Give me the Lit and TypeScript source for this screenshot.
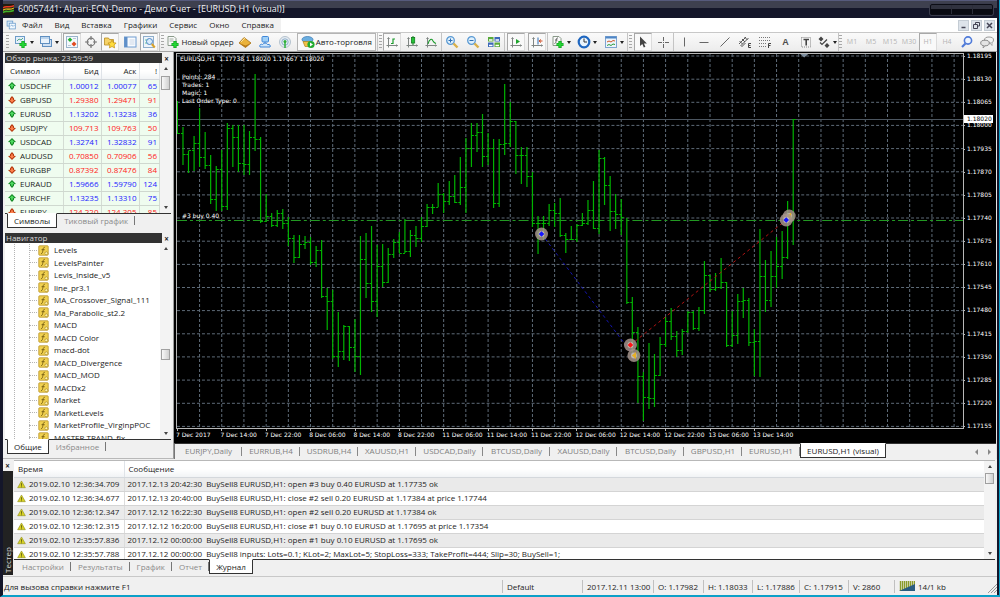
import { LitElement, html, svg, css } from "lit";
import { customElement, state } from "lit/decorators.js";
import { classMap } from "lit/directives/class-map.js";

/* high, low, close of every hourly bar, in plot units */
const BARS: number[][] = [
  [101, 133, 133], [127, 165, 154], [151, 173, 150], [136, 171, 143], [108, 167, 157], [132, 169, 165], [155, 204, 199],
  [166, 211, 169], [150, 211, 206], [123, 210, 128], [125, 167, 137], [125, 172, 163], [125, 175, 164], [131, 175, 137],
  [74, 151, 139], [137, 223, 221], [194, 222, 216], [213, 227, 225], [210, 227, 213], [209, 229, 223], [217, 246, 238],
  [235, 263, 257], [235, 258, 244], [236, 249, 242], [237, 265, 262], [246, 267, 250], [240, 298, 296], [288, 330, 301],
  [290, 359, 356], [312, 367, 351], [325, 360, 326], [326, 361, 347], [319, 372, 356], [236, 375, 259], [233, 298, 283],
  [226, 312, 301], [245, 317, 266], [244, 287, 282], [248, 283, 254], [239, 258, 242], [232, 253, 253], [219, 253, 251],
  [230, 257, 235], [226, 247, 238], [217, 242, 226], [204, 227, 207], [204, 214, 207], [183, 207, 194], [193, 213, 201],
  [181, 205, 196], [175, 203, 202], [157, 205, 187], [138, 213, 148], [123, 167, 135], [123, 152, 132], [114, 167, 156],
  [133, 165, 148], [139, 208, 203], [139, 207, 144], [84, 155, 143], [102, 147, 121], [121, 174, 155], [147, 184, 155],
  [147, 187, 176], [172, 227, 223], [216, 254, 223], [216, 240, 223], [204, 226, 210], [203, 227, 213], [198, 237, 235],
  [233, 253, 239], [226, 240, 239], [224, 242, 225], [213, 226, 223], [200, 225, 210], [181, 229, 228], [150, 234, 158],
  [157, 205, 185], [176, 231, 211], [194, 229, 214], [199, 235, 217], [218, 304, 302], [297, 353, 332], [327, 403, 376],
  [372, 421, 397], [343, 409, 398], [354, 407, 375], [337, 376, 344], [317, 347, 321], [308, 340, 336], [331, 357, 350],
  [329, 355, 331], [311, 333, 312], [311, 330, 328], [307, 331, 310], [261, 314, 275], [275, 292, 289], [273, 291, 287],
  [258, 289, 282], [282, 347, 345], [311, 347, 335], [294, 344, 301], [288, 318, 300], [298, 346, 342], [329, 376, 341],
  [229, 377, 276], [260, 312, 300], [251, 307, 276], [237, 288, 266], [231, 279, 257], [201, 259, 217], [119, 245, 119],
];
const STEP = 5.555;
const barX = (i: number) => 177.4 + i * STEP;

const PRICES = Array.from({ length: 17 }, (_, i) => ((118195 - i * 65) / 100000).toFixed(5));
const TIMES = ["7 Dec 2017", "7 Dec 14:00", "7 Dec 22:00", "8 Dec 06:00", "8 Dec 14:00", "8 Dec 22:00", "11 Dec 06:00",
  "11 Dec 14:00", "11 Dec 22:00", "12 Dec 06:00", "12 Dec 14:00", "12 Dec 22:00", "13 Dec 06:00", "13 Dec 14:00"];

const QUOTES: [string, string, string, string, boolean][] = [
  ["USDCHF", "1.00012", "1.00077", "65", true], ["GBPUSD", "1.29380", "1.29471", "91", false],
  ["EURUSD", "1.13202", "1.13238", "36", true], ["USDJPY", "109.713", "109.763", "50", false],
  ["USDCAD", "1.32741", "1.32832", "91", true], ["AUDUSD", "0.70850", "0.70906", "56", false],
  ["EURGBP", "0.87392", "0.87476", "84", false], ["EURAUD", "1.59666", "1.59790", "124", true],
  ["EURCHF", "1.13235", "1.13310", "75", true], ["EURJPY", "124.220", "124.305", "85", false],
];
const INDICATORS = ["Levels", "LevelsPainter", "Levis_Inside_v5", "line_pr3.1", "MA_Crossover_Signal_111",
  "Ma_Parabolic_st2.2", "MACD", "MACD Color", "macd-dot", "MACD_Divergence", "MACD_MOD", "MACDx2", "Market",
  "MarketLevels", "MarketProfile_VirginpPOC", "MASTER TRAND_fix"];
const CHART_TABS = ["EURJPY,Daily", "EURRUB,H4", "USDRUB,H4", "XAUUSD,H1", "USDCAD,Daily", "BTCUSD,Daily",
  "XAUUSD,Daily", "BTCUSD,Daily", "GBPUSD,H1", "EURUSD,H1", "EURUSD,H1 (visual)"];
const LOG = [
  ["2019.02.10 12:36:34.709", "2017.12.13 20:42:30", "BuySell8 EURUSD,H1: open #3 buy 0.40 EURUSD at 1.17735 ok"],
  ["2019.02.10 12:36:34.677", "2017.12.13 20:40:00", "BuySell8 EURUSD,H1: close #2 sell 0.20 EURUSD at 1.17384 at price 1.17744"],
  ["2019.02.10 12:36:12.347", "2017.12.12 16:22:30", "BuySell8 EURUSD,H1: open #2 sell 0.20 EURUSD at 1.17384 ok"],
  ["2019.02.10 12:36:12.315", "2017.12.12 16:20:00", "BuySell8 EURUSD,H1: close #1 buy 0.10 EURUSD at 1.17695 at price 1.17354"],
  ["2019.02.10 12:35:57.836", "2017.12.12 00:00:00", "BuySell8 EURUSD,H1: open #1 buy 0.10 EURUSD at 1.17695 ok"],
  ["2019.02.10 12:35:57.788", "2017.12.12 00:00:00", "BuySell8 inputs: Lots=0.1; KLot=2; MaxLot=5; StopLoss=333; TakeProfit=444; Slip=30; BuySell=1;"],
];

const plus = svg`<path d="M9 6v7M5.500 9.500h7" stroke="#0b9a16" stroke-width="3.200"/><path d="M9 6.500v6M6 9.500h6" stroke="#25d636" stroke-width="1.800"/>`;
const axes = svg`<path d="M3.500 3v9.500M1.500 10.500h11M2.500 4l1-1.500 1 1.500M11.500 9.500l1 1-1 1" fill="none" stroke="#808684" stroke-width="1"/>`;
const lens = svg`<circle cx="5.500" cy="5.500" r="3.800" fill="#dff0fc" stroke="#5a9ad4" stroke-width="1.300"/><path d="M8.500 8.500l4 4" stroke="#d9b04a" stroke-width="2.400"/>`;

const ICONS: Record<string, unknown> = {
  newChart: svg`<rect x="1.500" y="1.500" width="9" height="7" fill="#e4effa" stroke="#6e9cc8"/><path d="M3 6l2-2 2 1 2-2" fill="none" stroke="#5a8"/>${plus}`,
  profiles: svg`<rect x="3.500" y="4.500" width="9" height="7" fill="#cfe0f2" stroke="#5f8fc0"/><rect x="1.500" y="1.500" width="9" height="7" fill="#e8f2fb" stroke="#5f8fc0"/><path d="M1.500 3h9" stroke="#8fb6dd"/>`,
  watch: svg`<rect x="1.500" y="1.500" width="11" height="11" fill="#f4f8fc" stroke="#9ab4cc"/><path d="M5 2.500l2.300 2.300L5 7.100 2.700 4.800z" fill="#22b030"/><path d="M9 6.500l2.500 2.500L9 11.500 6.500 9z" fill="#e04a20"/><path d="M8 3.500h3M3 10.500h3" stroke="#b9c8d6"/>`,
  target: svg`<circle cx="7" cy="7" r="3.800" fill="none" stroke="#777" stroke-width="1.200"/><path d="M7 1v4M7 9v4M1 7h4M9 7h4" stroke="#777" stroke-width="1.200"/>`,
  navi: svg`<path d="M1.500 3h4l1 1.500h4V10h-9z" fill="#f6d268" stroke="#b68a20" stroke-width=".8"/><path d="M9 5l1.300 2.700 2.800.3-2 2 .5 2.900L9 11.500l-2.600 1.400.5-2.900-2-2 2.800-.3z" fill="#ffdc3c" stroke="#c08e12" stroke-width=".7"/>`,
  terminal: svg`<rect x="1.500" y="2" width="11.500" height="10" fill="#f8fbff" stroke="#6f9cd0"/><rect x="1.500" y="2" width="3" height="10" fill="#5f8fc8"/><path d="M6.500 5h5M6.500 7h5M6.500 9h5" stroke="#c0cfe0" stroke-width=".8"/>`,
  tester: svg`<rect x="1.500" y="1.500" width="10" height="11" fill="#eef4fa" stroke="#8faecb"/><path d="M3 5h4M3 8h3" stroke="#6c9"/><circle cx="7.500" cy="6.500" r="3" fill="#d7ebfa" stroke="#4f86c6"/><path d="M9.800 9l3 3.500" stroke="#d9a22a" stroke-width="2"/>`,
  order: svg`<path d="M2 1.500h6l2 2v7H2z" fill="#fafafa" stroke="#8a9a8a"/><path d="M3.500 4h4M3.500 6h4" stroke="#8a9a8a" stroke-width=".8"/>${plus}`,
  book: svg`<path d="M1 8l5-5.500L13 8l-5.500 4.500z" fill="#eab23a" stroke="#a8741a" stroke-width=".8"/><path d="M1 8l6.500 2.500L13 8l-5.500 4.500z" fill="#b87916"/><path d="M3 7l4-4" stroke="#fbe39a"/>`,
  vps: svg`<rect x="4" y="1.500" width="6.500" height="5.500" rx="1" fill="#9fd0f7" stroke="#3f86d8"/><path d="M7 7v3" stroke="#3f86d8"/><path d="M2 12c-1-2 1-3.500 2.500-2.500C6 7.500 9 8 9.500 9.500 12 9 13 11 12 12z" fill="#cfe6fa" stroke="#3f86d8"/>`,
  signal: svg`<circle cx="7" cy="7" r="5.500" fill="#e6ecf2" stroke="#b4c2ce"/><circle cx="7" cy="7" r="3.200" fill="none" stroke="#8fb0cc"/><circle cx="7" cy="6.500" r="1.500" fill="#2fb03a"/><path d="M7 7v6" stroke="#2fb03a" stroke-width="1.500"/>`,
  auto: svg`<ellipse cx="6.500" cy="4.500" rx="5.500" ry="3" fill="#6aaee0" stroke="#2f72b0" stroke-width=".7"/><path d="M2 6.500h8l-1 5H4z" fill="#f0c048" stroke="#b08418" stroke-width=".7"/><circle cx="10" cy="9.500" r="3.600" fill="#22ab30"/><path d="M9 7.500v4l3-2z" fill="#fff"/>`,
  bars: svg`${axes}<path d="M6 8.500h2V4h2" fill="none" stroke="#1b9b2c" stroke-width="1.200"/>`,
  candle: svg`${axes}<path d="M8 1v9" stroke="#147a20"/><rect x="6.500" y="2.500" width="3.200" height="5.500" fill="#22c236" stroke="#147a20" stroke-width=".8"/>`,
  line: svg`${axes}<path d="M4 9c1-5 4-6 5-3 .5 1 1.500 2 3 2.500" fill="none" stroke="#1b9b2c" stroke-width="1.100"/>`,
  zoomIn: svg`${lens}<path d="M3.500 5.500h4M5.500 3.500v4" stroke="#2f6fb5"/>`,
  zoomOut: svg`${lens}<path d="M3.500 5.500h4" stroke="#2f6fb5"/>`,
  tile: svg`<rect x="1" y="2" width="5.500" height="4.500" fill="#58a93a"/><rect x="7.500" y="2" width="5.500" height="4.500" fill="#3c68b8"/><rect x="1" y="7.500" width="5.500" height="4.500" fill="#3c68b8"/><rect x="7.500" y="7.500" width="5.500" height="4.500" fill="#58a93a"/><path d="M2 5h3.500M8.500 5H12M2 10.500h3.500M8.500 10.500H12" stroke="#fff" stroke-width="1.500"/>`,
  scroll: svg`${axes}<path d="M7 4v5l4-2.500z" fill="#1ea42c"/>`,
  shift: svg`${axes}<path d="M8 2.500v7" stroke="#2f6fb5"/><path d="M12.500 6H9.500M11 4.500L9 6l2 1.500" fill="none" stroke="#d04a20"/>`,
  indi: svg`<path d="M2 1.500h6l2 2v7H2z" fill="#fafafa" stroke="#8a9a8a"/><path d="M7 3C5.500 2.500 5.500 4 5.200 5.500S4.800 8.500 3.500 8.500M4 5h2.500" fill="none" stroke="#555" stroke-width=".9"/>${plus}`,
  clock: svg`<circle cx="7" cy="7" r="5.300" fill="#e9f4fd" stroke="#1f67c0" stroke-width="2.200"/><path d="M7 3.500V7h3" fill="none" stroke="#333"/>`,
  template: svg`<rect x="1.500" y="1.500" width="11" height="11" fill="#eef5fc" stroke="#7fa4d0"/><path d="M1.500 2.500h11" stroke="#4f86c6" stroke-width="2"/><path d="M3 7l2-1 2 1 2-1.500 2 .5" fill="none" stroke="#d0582a"/><path d="M3 10.500l2-1 2 1 2-1.500 2 .5" fill="none" stroke="#2a9a3a"/>`,
  cursor: svg`<path d="M4 1.500v9.500l2.300-2 1.500 3.500 1.600-.7-1.500-3.300h3z" fill="#444"/>`,
  cross: svg`<path d="M7.500 2v4M7.500 9v4M2 7.500h4M9 7.500h4M7 7.500h1" stroke="#666" stroke-width="1"/>`,
  vline: svg`<path d="M7.500 2.500v9" stroke="#666" stroke-width="1"/>`,
  hline: svg`<path d="M2.500 7.500h9" stroke="#666" stroke-width="1"/>`,
  trend: svg`<path d="M2.500 11.500l9-9" stroke="#666" stroke-width="1"/>`,
  channel: svg`<path d="M1 9l7-7M2.500 11l8-8M1.500 6l3 3M4 4l3 3M6.500 2l3 3M3.500 12l4-4" stroke="#555" stroke-width="1"/><path d="M13 8.500h-2.500v4H13M10.500 10.500h2" fill="none" stroke="#444"/>`,
  fibo: svg`<path d="M1 2.500h11M1 5.500h11M1 8.500h7M1 11.500h7" stroke="#777" stroke-dasharray="1 1"/><path d="M10.500 13V8.500H13M10.500 10.500h2" fill="none" stroke="#444"/>`,
  label: svg`<rect x="2.500" y="2.500" width="9" height="9.500" fill="none" stroke="#888" stroke-dasharray="1 1"/><path d="M4.500 4.500h5.500M7.200 4.500v6" stroke="#444" stroke-width="1.600"/>`,
  arrows: svg`<path d="M4 1.500L6.500 4 4 6.500 1.500 4zM10 8l2.500 2.500L10 13l-2.500-2.500z" fill="#444"/><path d="M3 7.500l2 2L10 4.500" fill="none" stroke="#444" stroke-width="1.200"/>`,
  search: svg`<circle cx="8" cy="5.500" r="3.600" fill="#eef5ff" stroke="#4f7ad8" stroke-width="1.600"/><path d="M5.500 8.500L2 12" stroke="#4f7ad8" stroke-width="2.200"/>`,
  chat: svg`<ellipse cx="9" cy="5" rx="4.500" ry="3" fill="#f4f4f4" stroke="#999"/><path d="M10 8l2 2.500V7" fill="#f4f4f4" stroke="#999" stroke-width=".8"/><ellipse cx="5" cy="8" rx="4.300" ry="2.800" fill="#e4e4e4" stroke="#888"/><path d="M3.500 10.500L3 13l2.500-2.300" fill="#e4e4e4" stroke="#888" stroke-width=".8"/>`,
  warn: svg`<path d="M7 1.500l6 10.500H1z" fill="#d6d024" stroke="#8c8a18" stroke-width=".9"/><path d="M7 5v4M7 10v1.300" stroke="#555210" stroke-width="1.300"/>`,
  func: svg`<rect x="1" y="1" width="12" height="12" rx="1" fill="#f0d04e" stroke="#b8922a"/><path d="M8.500 3C6.500 3 6.500 5 6.200 7S5.500 11 4 11M4.500 6h4" fill="none" stroke="#6b5310" stroke-width="1.100"/><path d="M10.500 8.300l2.200 2.200-2.200 2.200-2.200-2.200z" fill="#fff3b0" stroke="#9a7a18" stroke-width=".8"/>`,
  up: svg`<path d="M7 0l7 7-3.500.5V10L7 14l-3.500-4V7.500L0 7z" fill="#158a26"/><path d="M7 2.500L11 7H8.500v3h-3V7H3z" fill="#4fdc62"/>`,
  down: svg`<path d="M7 14l7-7-3.500-.5V4L7 0 3.500 4v2.500L0 7z" fill="#b83a10"/><path d="M7 11.500L11 7H8.500V4h-3v3H3z" fill="#ff8450"/>`,
  page: svg`<rect x="1.500" y="1.500" width="8" height="7" fill="#d8e9f8" stroke="#5f94c8"/><rect x="4.500" y="4.500" width="8.500" height="8" fill="#f4faff" stroke="#5f94c8"/><path d="M6 9l2-2 2 2 2-2" fill="none" stroke="#5f94c8"/>`,
  logo: svg`<rect width="14" height="14" fill="#221c10"/><path d="M0 5c4-4 7 1 14-3" fill="none" stroke="#e83a20" stroke-width="1.800"/><path d="M0 8c4-4 7 1 14-3" fill="none" stroke="#f0d020" stroke-width="1.500"/><path d="M0 11c4-4 7 1 14-3" fill="none" stroke="#3fae2a" stroke-width="2"/>`,
};
const icon = (name: string) => html`<svg class="icon" viewBox="0 0 14 14" aria-hidden="true">${ICONS[name]}</svg>`;

const grip = html`<i class="grip"></i>`;
const tool = (name: string, label: string, on = false) =>
  html`<button class=${classMap({ tool: true, on })} aria-label=${label} aria-pressed=${on}>${icon(name)}</button>`;
const drop = (name: string, label: string) =>
  html`<button class="drop" aria-label=${label}>${icon(name)}<i class="caret"></i></button>`;

@customElement("app-root")
export class AppRoot extends LitElement {
  @state() private chartTab = 10;
  @state() private logTab = 4;
  @state() private frame = "H1";

  static styles = css`
    :host { display: block; font: 8px/12px "Open Sans", "Noto Sans", sans-serif; color: #1c1c1c; }
    * { box-sizing: border-box; }
    button { font: inherit; color: inherit; background: none; border: 0; padding: 0; margin: 0; white-space: nowrap; }
    a { color: inherit; text-decoration: none; }
    .icon { width: 14px; height: 14px; display: block; flex: none; }
    .window { height: 100vh; display: flex; flex-direction: column; background: #f0f0f0; border-left: 3px solid #14162a; border-right: 1px solid #0ba0c8; border-bottom: 2px solid #0ba0c8; }
    .inner { flex: 1; min-height: 0; display: flex; flex-direction: column; border-right: 2px solid #14162a; }

    .title { height: 18px; flex: none; display: flex; align-items: center; gap: 4px; color: #f2f2f4; font-size: 9px; background: linear-gradient(#565a7c 0 1px, #3e404f 1px 8px, #141629 8px); }
    .title h1 { font: inherit; margin: 0; flex: 1; }
    .title .icon { width: 11px; height: 11px; }
    .sysbtns { display: grid; grid-template-columns: repeat(3, 1fr); width: 63px; height: 11px; margin-right: 4px; border: 1px solid #0c0d16; border-radius: 2px; box-shadow: 0 0 0 1px #3a3c4c; background: linear-gradient(#30323f 45%, #090a12 45%); }
    .sysbtns button + button { border-left: 1px solid #2c2e3a; }

    .menu { height: 14px; flex: none; display: flex; background: #fff; align-items: center; }
    .menu nav { display: flex; align-items: center; height: 14px; background: #f1f1f1; padding: 0 7px 0 3px; gap: 12px; }
    .menu nav .icon { width: 10px; height: 10px; margin-right: -6px; }
    .mdi { margin-left: auto; display: flex; gap: 2px; padding-right: 2px; }
    .mdi button { width: 11px; height: 11px; background: #dde3ea; border: 1px solid #c4ccd4; }
    .mdi .icon { width: 9px; height: 9px; }

    .tools { height: 20px; flex: none; display: flex; background: linear-gradient(#fafafa, #ececec); border-top: 1px solid #c8c8c8; border-bottom: 1px solid #a4a4a4; }
    .group { display: flex; align-items: center; justify-content: space-around; flex: none; border-left: 1px solid #c4c4c4; }
    .group:first-child { border-left: 0; }
    .grip { width: 3px; height: 14px; flex: none; background: repeating-linear-gradient(#a8a8a8 0 1px, transparent 1px 3px); }
    .tool { width: 18px; height: 18px; display: flex; align-items: center; justify-content: center; flex: none; border: 1px solid transparent; color: #b4b4b4; font-size: 7px; }
    .tool.on { background: #f9f9f9; border-color: #a8a8a8 #dcdcdc #dcdcdc #a8a8a8; }
    .drop { display: flex; align-items: center; gap: 2px; flex: none; }
    .caret { border: 2px solid transparent; border-top: 3px solid #222; border-bottom: 0; }
    .wide { display: flex; align-items: center; gap: 1px; height: 18px; flex: none; }
    .wide.on { border: 1px solid #b4b4b4; background: #f9f9f9; padding: 0 3px; }
    .letter { font: bold 9px/14px "Liberation Sans", sans-serif; color: #4c4c4c; }
    .g-chart { width: 58px; } .g-panels { width: 98px; } .g-trade { width: 218px; }
    .g-type { width: 64px; } .g-zoom { width: 63px; } .g-scroll { width: 43px; } .g-add { width: 80px; }
    .g-cursor { width: 46px; } .g-draw { width: 165px; } .g-frames { width: 118px; justify-content: flex-start; gap: 1px; }
    .g-end { margin-left: auto; width: 40px; border: 0; }

    .main { flex: 1; min-height: 0; display: grid; grid-template-columns: 171px minmax(0, 1fr); grid-template-rows: minmax(0, 1fr); }
    .side { display: flex; flex-direction: column; padding: 1px 2px 0; min-height: 0; border-right: 1px solid #9c9c9c; border-bottom: 1px solid #b8b8b8; }
    .panel { display: flex; flex-direction: column; min-height: 0; }
    .panel.market { height: 176px; flex: none; margin-bottom: 4px; }
    .panel.navi { flex: 1; }
    .cap { display: flex; height: 10px; align-items: center; flex: none; line-height: 10px; }
    .cap h2 { margin: 0; flex: 1; font: inherit; color: #d8d8d8; background: #333; padding-left: 1px; height: 10px; line-height: 9px; }
    .close { width: 9px; line-height: 9px; font-weight: bold; text-align: center; }
    .body { flex: 1; min-height: 0; display: flex; background: #fff; overflow: hidden; border-bottom: 1px solid #333; }
    .scroll { width: 11px; flex: none; display: flex; flex-direction: column; align-items: center; background: #f3f3f3; padding: 4px 0; }
    .scroll .u { border: 2px solid transparent; border-bottom: 3px solid #444; border-top: 0; }
    .scroll .d { border: 2px solid transparent; border-top: 3px solid #444; border-bottom: 0; margin-top: auto; }
    .thumb { width: 9px; border: 1px solid #a0a0a0; background: linear-gradient(90deg, #f8f8f8, #d0d0d0); }
    .market .thumb { height: 14px; margin-top: 6px; }
    .navi .thumb { height: 11px; margin-top: 99px; }
    .log .thumb { height: 11px; margin-top: 5px; }

    .scroller { flex: 1; min-width: 0; overflow: hidden; }
    table { border-collapse: collapse; table-layout: fixed; width: 100%; }
    th { font-weight: normal; height: 16px; padding: 0 2px; text-align: left; background: linear-gradient(#fff 50%, #f1f3f5); border-right: 1px solid #dfe3e8; border-bottom: 1px solid #d4d8dc; }
    td { height: 14px; padding: 0 2px; white-space: nowrap; line-height: 12px; }
    .quotes td { background: #effcef; border-right: 1px solid #d4dcd4; border-bottom: 1px solid #cfd8cf; }
    .quotes th:not(:first-child), .quotes td:not(:first-child) { text-align: right; }
    .quotes th:first-child { padding-left: 5px; }
    .quotes .rise { color: #2222ff; }
    .quotes .fall { color: #ff2020; }
    .c-sym { width: 58px; } .c-px { width: 38px; }
    .sym { display: flex; align-items: center; gap: 4px; padding-left: 1px; color: #1c1c1c; }
    .sym .icon { width: 8px; height: 8px; }

    .tabs { display: flex; flex: none; height: 15px; padding-left: 2px; color: #8a8a8a; }
    .navi .tabs { height: 18px; }
    .tab { height: 13px; line-height: 12px; padding: 0 7px; position: relative; }
    .tab:not(.on)::after { content: ""; position: absolute; right: 0; top: 2px; height: 9px; border-right: 1px solid #777; }
    .tab.on { color: #1c1c1c; background: #fff; border: 1px solid #333; border-top-color: #fff; margin-top: -1px; height: 15px; padding: 0 6px; }

    .tree { flex: 1; min-width: 0; overflow: hidden; }
    .tree ul { list-style: none; margin: 1px 0 0; padding: 0; height: 200px; display: grid; grid-auto-rows: 1fr; background: repeating-linear-gradient(#b4b4b4 0 1px, transparent 1px 2px) 9px 0 / 1px 100% no-repeat, repeating-linear-gradient(#b4b4b4 0 1px, transparent 1px 2px) 24px 0 / 1px 100% no-repeat; }
    .tree li { display: flex; align-items: center; padding-left: 24px; white-space: nowrap; }
    .tree li::before { content: ""; width: 8px; margin-right: 1px; border-top: 1px dotted #b4b4b4; }
    .tree .icon { width: 11px; height: 11px; margin-right: 5px; }

    .work { display: flex; flex-direction: column; min-width: 0; min-height: 0; border-right: 1px solid #e4e4e4; }
    .chart { flex: 1; min-height: 0; display: grid; grid-template-columns: minmax(0, 1fr) 32px; grid-template-rows: minmax(0, 1fr) 13px; padding-left: 2px; background: #000; color: #fff; font: 6px/8px "DejaVu Sans", sans-serif; }
    .plot { position: relative; margin: 1px 0; border: 1px solid #b8b8b8; min-height: 0; }
    .plot svg { display: block; width: 100%; height: 100%; position: absolute; inset: 0; }
    .plot p { position: absolute; margin: 0; white-space: pre; }
    .plot .head { left: 3px; top: 1px; }
    .plot .stats { left: 5px; top: 19px; }
    .plot .order { left: 5px; top: 158px; }
    .prices { position: relative; display: flex; flex-direction: column; justify-content: space-between; }
    .prices span { padding-left: 3px; position: relative; }
    .prices span::before { content: ""; position: absolute; left: -1px; top: 4px; width: 2px; border-top: 1px solid #b8b8b8; }
    .prices .now { position: absolute; left: 0; top: 63px; padding: 0 1px 0 3px; background: #fff; color: #000; font-weight: normal; }
    .times { grid-column: 1 / -1; display: grid; grid-template-columns: repeat(14, 44px); justify-content: space-between; padding-right: 199px; white-space: nowrap; }
    .times span { position: relative; padding-top: 1px; }
    .times span::before { content: ""; position: absolute; left: 1px; top: -2px; height: 3px; border-left: 1px solid #b8b8b8; }

    .ctabs { display: flex; height: 16px; flex: none; border-top: 1px solid #333; color: #808080; border-left: 1px solid #777; }
    .ctab { width: 58px; height: 14px; text-align: center; position: relative; }
    .ctab.long { width: 67px; }
    .ctab:not(.on)::after { content: ""; position: absolute; right: 0; top: 3px; height: 9px; border-right: 1px solid #888; }
    .ctab.on { width: 86px; color: #1c1c1c; background: #fff; border: 1px solid #333; border-top-color: #fff; margin-top: -1px; height: 15px; }
    .pager { margin-left: auto; display: flex; align-items: center; gap: 10px; padding-right: 5px; }
    .pager i { border: 3px solid transparent; width: 0; }
    .pager .l { border-right-color: #888; border-left: 0; }
    .pager .r { border-left-color: #888; border-right: 0; }

    .log { display: flex; height: 118px; flex: none; padding-top: 1px; border-bottom: 1px solid #c8c8c8; }
    .spine { width: 11px; flex: none; display: flex; flex-direction: column; padding: 0 1px 1px 0; }
    .spine h2 { margin: 0; flex: 1; font: inherit; line-height: 9px; background: #222; color: #d8d8d8; writing-mode: vertical-rl; transform: rotate(180deg); padding-top: 2px; }
    .spine .close { width: 9px; height: 11px; }
    .logbox { flex: 1; min-width: 0; display: flex; flex-direction: column; padding-right: 2px; }
    .logbox .body { border-top: 1px solid #b8b8b8; }
    .entries th { padding-left: 4px; }
    .entries td { border-right: 1px solid #dcdcdc; border-bottom: 1px solid #d4d4d4; padding-left: 3px; }
    .entries td:last-child, .entries th:last-child { border-right: 0; }
    .entries tbody tr:nth-child(odd) { background: #eaeaea; }
    .entries .c-time { width: 110px; }
    .stamp { display: flex; align-items: center; gap: 3px; }
    .stamp .icon { width: 9px; height: 9px; }
    .entries .msg { white-space: pre; }
    .logbox .tabs { padding-left: 1px; height: 16px; }

    .status { height: 18px; flex: none; display: grid; grid-template-columns: 1fr 80px 71px 50px 49px 47px 49px 46px 103px; align-items: center; }
    .status span { height: 13px; line-height: 13px; padding-left: 4px; border-left: 1px solid #c0c0c0; white-space: nowrap; display: flex; align-items: center; gap: 3px; }
    .status span:first-child { border: 0; padding-left: 1px; }
    .status .net { width: 16px; height: 10px; }
    .status .size { margin-left: auto; width: 10px; height: 10px; align-self: flex-end; }
  `;

  private marker(x: number, y: number, color: string, shape: string) {
    return svg`<g transform="translate(${x} ${y})"><circle r="6.500" fill="#a4948c" fill-opacity=".85"/><circle r="3" fill="#e0dcd4" fill-opacity=".6"/><path d=${shape} fill=${color}/></g>`;
  }

  private plot() {
    const v = Array.from({ length: 35 }, (_, i) => `M${(199.6 + i * 22.22).toFixed(1)} 54V428`).join("");
    const h = Array.from({ length: 17 }, (_, i) => `M177 ${(56 + i * 23.15).toFixed(1)}H964`).join("");
    const bars = BARS.map(([hi, lo, close], i) => {
      const x = barX(i);
      const open = i ? BARS[i - 1][2] : close;
      const left = open >= hi && open <= lo ? `M${(x - 2).toFixed(1)} ${open}.5h2` : "";
      return `M${x.toFixed(1)} ${hi}V${lo}${left}M${x.toFixed(1)} ${close}.5h2.5`;
    }).join("");
    const diamond = "M0-2.800L2.800 0 0 2.800-2.800 0z";
    const flag = "M-2 0L2-3.500V3.500z";
    return html`<svg viewBox="177 54 787 374" preserveAspectRatio="none" role="img" aria-label="EURUSD,H1">
      <path d=${v} stroke="#5e6b78" stroke-dasharray="3 2" stroke-width="1" />
      <path d=${h} stroke="#5e6b78" stroke-dasharray="3 2" stroke-width="1" />
      <path d="M177 119.500H964" stroke="#4c5660" />
      <path d="M177 220.500H964" stroke="#229a22" stroke-dasharray="10 3 3 3" />
      <path d=${bars} stroke="#00b400" stroke-width="1.200" fill="none" />
      <path d="M542 234L633 354" stroke="#1414b0" stroke-dasharray="3 3" />
      <path d="M631 345L787 220" stroke="#b01414" stroke-dasharray="3 3" />
      <path d="M801 54h8l-4 3.500z" fill="#8090a0" />
      ${this.marker(542, 234, "#1414ff", diamond)}${this.marker(634.5, 355.5, "#e8b020", flag)}
      ${this.marker(631, 345, "#ff1414", diamond)}${this.marker(790, 216, "#e8b020", flag)}
      ${this.marker(787, 220, "#1414ff", diamond)}
    </svg>`;
  }

  private scrollbar() {
    return html`<div class="scroll"><i class="u"></i><i class="thumb"></i><i class="d"></i></div>`;
  }

  private tabs(names: string[], active: number, pick: (i: number) => void = () => {}) {
    return html`<div class="tabs" role="tablist">${names.map((n, i) => html`<button role="tab"
      class=${classMap({ tab: true, on: i === active })} aria-selected=${i === active} @click=${() => pick(i)}>${n}</button>`)}</div>`;
  }

  private toolbar() {
    return html`<div class="tools" role="toolbar">
      <div class="group g-chart">${grip}${drop("newChart", "Новый график")}${drop("profiles", "Профили")}</div>
      <div class="group g-panels">${tool("watch", "Обзор рынка", true)}${tool("target", "Окно данных")}${tool("navi", "Навигатор", true)}${tool("terminal", "Терминал")}${tool("tester", "Тестер", true)}</div>
      <div class="group g-trade">${grip}<button class="wide">${icon("order")}Новый ордер</button>
        ${tool("book", "MetaEditor")}${tool("vps", "VPS")}${tool("signal", "Сигналы")}
        <button class="wide on">${icon("auto")}Авто-торговля</button></div>
      <div class="group g-type">${grip}${tool("bars", "Бары", true)}${tool("candle", "Свечи")}${tool("line", "Линия")}</div>
      <div class="group g-zoom">${tool("zoomIn", "Увеличить")}${tool("zoomOut", "Уменьшить")}${tool("tile", "Мозаика")}</div>
      <div class="group g-scroll">${tool("scroll", "Автопрокрутка", true)}${tool("shift", "Сдвиг", true)}</div>
      <div class="group g-add">${drop("indi", "Индикаторы")}${drop("clock", "Периоды")}${drop("template", "Шаблоны")}</div>
      <div class="group g-cursor">${grip}${tool("cursor", "Курсор", true)}${tool("cross", "Перекрестие")}</div>
      <div class="group g-draw">${tool("vline", "Вертикальная линия")}${tool("hline", "Горизонтальная линия")}${tool("trend", "Трендовая линия")}${tool("channel", "Канал")}${tool("fibo", "Фибоначчи")}<button class="tool"><span class="letter">A</span></button>${tool("label", "Метка")}${drop("arrows", "Стрелки")}</div>
      <div class="group g-frames">${grip}${["M1", "M5", "M15", "M30", "H1", "H4"].map((f) => html`<button
        class=${classMap({ tool: true, on: f === this.frame })} @click=${() => (this.frame = f)}>${f}</button>`)}</div>
      <div class="group g-end">${tool("search", "Поиск")}${tool("chat", "Чат")}</div>
    </div>`;
  }

  render() {
    return html`<div class="window"><div class="inner">
      <header class="title">${icon("logo")}<h1>60057441: Alpari-ECN-Demo - Демо Счет - [EURUSD,H1 (visual)]</h1>
        <div class="sysbtns"><button aria-label="Свернуть"></button><button aria-label="Развернуть"></button><button aria-label="Закрыть"></button></div></header>
      <div class="menu">
        <nav>${icon("page")}${["Файл", "Вид", "Вставка", "Графики", "Сервис", "Окно", "Справка"].map((m) => html`<a href="#">${m}</a>`)}</nav>
        <div class="mdi">
          <button aria-label="Свернуть окно"><svg class="icon" viewBox="0 0 9 9"><path d="M2.500 6.500h4" stroke="#445" stroke-width="1.500"/></svg></button>
          <button aria-label="Восстановить окно"><svg class="icon" viewBox="0 0 9 9"><path d="M3.500 3V1.500h4v3.500H6M1.500 3.500h4v4h-4z" fill="none" stroke="#445"/></svg></button>
          <button aria-label="Закрыть окно"><svg class="icon" viewBox="0 0 9 9"><path d="M2 2l5 5M7 2L2 7" stroke="#445" stroke-width="1.500"/></svg></button>
        </div>
      </div>
      ${this.toolbar()}
      <div class="main">
        <aside class="side">
          <section class="panel market">
            <div class="cap"><h2>Обзор рынка: 23:59:59</h2><button class="close" aria-label="Закрыть">×</button></div>
            <div class="body"><div class="scroller"><table class="quotes">
              <colgroup><col class="c-sym" /><col class="c-px" /><col class="c-px" /><col /></colgroup>
              <thead><tr><th>Символ</th><th>Бид</th><th>Аск</th><th>!</th></tr></thead>
              <tbody>${QUOTES.map(([s, bid, ask, sp, up]) => html`<tr class=${up ? "rise" : "fall"}>
                <td><div class="sym">${icon(up ? "up" : "down")}${s}</div></td><td>${bid}</td><td>${ask}</td><td>${sp}</td></tr>`)}</tbody>
            </table></div>${this.scrollbar()}</div>
            ${this.tabs(["Символы", "Тиковый график"], 0)}
          </section>
          <section class="panel navi">
            <div class="cap"><h2>Навигатор</h2><button class="close" aria-label="Закрыть">×</button></div>
            <div class="body"><div class="tree"><ul>${INDICATORS.map((n) => html`<li>${icon("func")}${n}</li>`)}</ul></div>${this.scrollbar()}</div>
            ${this.tabs(["Общие", "Избранное"], 0)}
          </section>
        </aside>
        <section class="work">
          <div class="chart">
            <div class="plot">${this.plot()}
              <p class="head">EURUSD,H1  1.17738 1.18020 1.17667 1.18020</p>
              <p class="stats">Points: 284
Trades: 1
Magic: 1
Last Order Type: 0</p>
              <p class="order">#3 buy 0.40</p>
            </div>
            <div class="prices">${PRICES.map((p) => html`<span>${p}</span>`)}<b class="now">1.18020</b></div>
            <div class="times">${TIMES.map((t) => html`<span>${t}</span>`)}</div>
          </div>
          <div class="ctabs" role="tablist">${CHART_TABS.map((n, i) => html`<button role="tab" aria-selected=${i === this.chartTab}
            class=${classMap({ ctab: true, long: n.endsWith("Daily"), on: i === this.chartTab })} @click=${() => (this.chartTab = i)}>${n}</button>`)}
            <div class="pager"><i class="l"></i><i class="r"></i></div></div>
        </section>
      </div>
      <section class="log">
        <div class="spine"><button class="close" aria-label="Закрыть">×</button><h2>Тестер</h2></div>
        <div class="logbox">
          <div class="body"><div class="scroller"><table class="entries">
            <colgroup><col class="c-time" /><col /></colgroup>
            <thead><tr><th>Время</th><th>Сообщение</th></tr></thead>
            <tbody>${LOG.map(([t, when, text]) => html`<tr><td><div class="stamp">${icon("warn")}${t}</div></td><td class="msg">${when}  ${text}</td></tr>`)}</tbody>
          </table></div>${this.scrollbar()}</div>
          ${this.tabs(["Настройки", "Результаты", "График", "Отчет", "Журнал"], this.logTab, (i) => (this.logTab = i))}
        </div>
      </section>
      <footer class="status">
        <span>Для вызова справки нажмите F1</span><span>Default</span><span>2017.12.11 13:00</span><span>O: 1.17982</span><span>H: 1.18033</span>
        <span>L: 1.17886</span><span>C: 1.17915</span><span>V: 2860</span>
        <span><svg class="net" viewBox="0 0 16 10"><path d="M1.500 0v10M3.500 0v10M5.500 0v10M7.500 0v10M9.500 0v10M11.500 0v10M13.500 0v10M15.500 0v10" stroke="#8a9a2a" stroke-width="1.400"/><path d="M0 10L16 3v7z" fill="#2a5c80"/></svg>14/1 kb
          <svg class="size" viewBox="0 0 10 10"><path d="M1 10l9-9M4 10l6-6M7 10l3-3" stroke="#999"/></svg></span>
      </footer>
    </div></div>`;
  }
}
